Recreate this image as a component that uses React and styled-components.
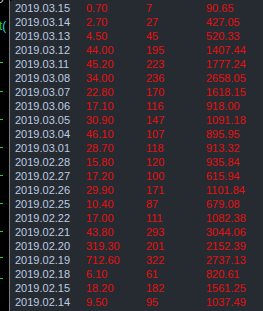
import styled, { createGlobalStyle } from "styled-components";

const GlobalStyle = createGlobalStyle`
  html, body {
    margin: 0;
    padding: 0;
    background: #000;
    overflow: hidden;
  }
`;

const rows = [
  ["2019.03.15", "0.70", "7", "90.65"],
  ["2019.03.14", "2.70", "27", "427.05"],
  ["2019.03.13", "4.50", "45", "520.33"],
  ["2019.03.12", "44.00", "195", "1407.44"],
  ["2019.03.11", "45.20", "223", "1777.24"],
  ["2019.03.08", "34.00", "236", "2658.05"],
  ["2019.03.07", "22.80", "170", "1618.15"],
  ["2019.03.06", "17.10", "116", "918.00"],
  ["2019.03.05", "30.90", "147", "1091.18"],
  ["2019.03.04", "46.10", "107", "895.95"],
  ["2019.03.01", "28.70", "118", "913.32"],
  ["2019.02.28", "15.80", "120", "935.84"],
  ["2019.02.27", "17.20", "100", "615.94"],
  ["2019.02.26", "29.90", "171", "1101.84"],
  ["2019.02.25", "10.40", "87", "679.08"],
  ["2019.02.22", "17.00", "111", "1082.38"],
  ["2019.02.21", "43.80", "293", "3044.06"],
  ["2019.02.20", "319.30", "201", "2152.39"],
  ["2019.02.19", "712.60", "322", "2737.13"],
  ["2019.02.18", "6.10", "61", "820.61"],
  ["2019.02.15", "18.20", "182", "1561.25"],
  ["2019.02.14", "9.50", "95", "1037.49"],
];

const ticks = [62, 91, 119, 147, 175, 203, 231, 257, 278];

const Screen = styled.div`
  display: flex;
  width: 263px;
  height: 311px;
  background: #000;
  font-family: "Liberation Sans", Arial, sans-serif;
`;

const Axis = styled.div`
  position: relative;
  width: 9px;
  flex: none;
  background: #000;
  border-right: 1px solid #7c7f84;
  overflow: hidden;
`;

const Tick = styled.div`
  position: absolute;
  left: 0;
  width: 3px;
  height: 1px;
  background: #22d022;
`;

const AxisLabel = styled.div`
  position: absolute;
  left: -1px;
  top: 20px;
  font-size: 12px;
  line-height: 12px;
  white-space: nowrap;
  color: #22d022;

  span {
    color: #18d8e0;
  }
`;

const TopLabel = styled.div`
  position: absolute;
  left: -3px;
  top: -7px;
  font-size: 12px;
  line-height: 12px;
  color: #c8c8c8;
`;

const Panel = styled.div`
  flex: 1;
  background: #262b32;
  border-top-left-radius: 3px;
  padding-top: 1px;
`;

const Row = styled.div`
  display: grid;
  grid-template-columns: 71px 60px 60px 1fr;
  height: 14px;
  line-height: 14px;
  font-size: 11px;
  padding-left: 5px;
  white-space: nowrap;
`;

const DateCell = styled.div`
  color: #bccbe0;
`;

const Num = styled.div`
  color: #e51010;
`;

export default function App() {
  return (
    <>
      <GlobalStyle />
      <Screen>
        <Axis>
          <TopLabel>0</TopLabel>
          <AxisLabel>
            t<span>(</span>
          </AxisLabel>
          {ticks.map((y) => (
            <Tick key={y} style={{ top: y }} />
          ))}
        </Axis>
        <Panel>
          {rows.map((r) => (
            <Row key={r[0]}>
              <DateCell>{r[0]}</DateCell>
              <Num>{r[1]}</Num>
              <Num>{r[2]}</Num>
              <Num>{r[3]}</Num>
            </Row>
          ))}
        </Panel>
      </Screen>
    </>
  );
}
